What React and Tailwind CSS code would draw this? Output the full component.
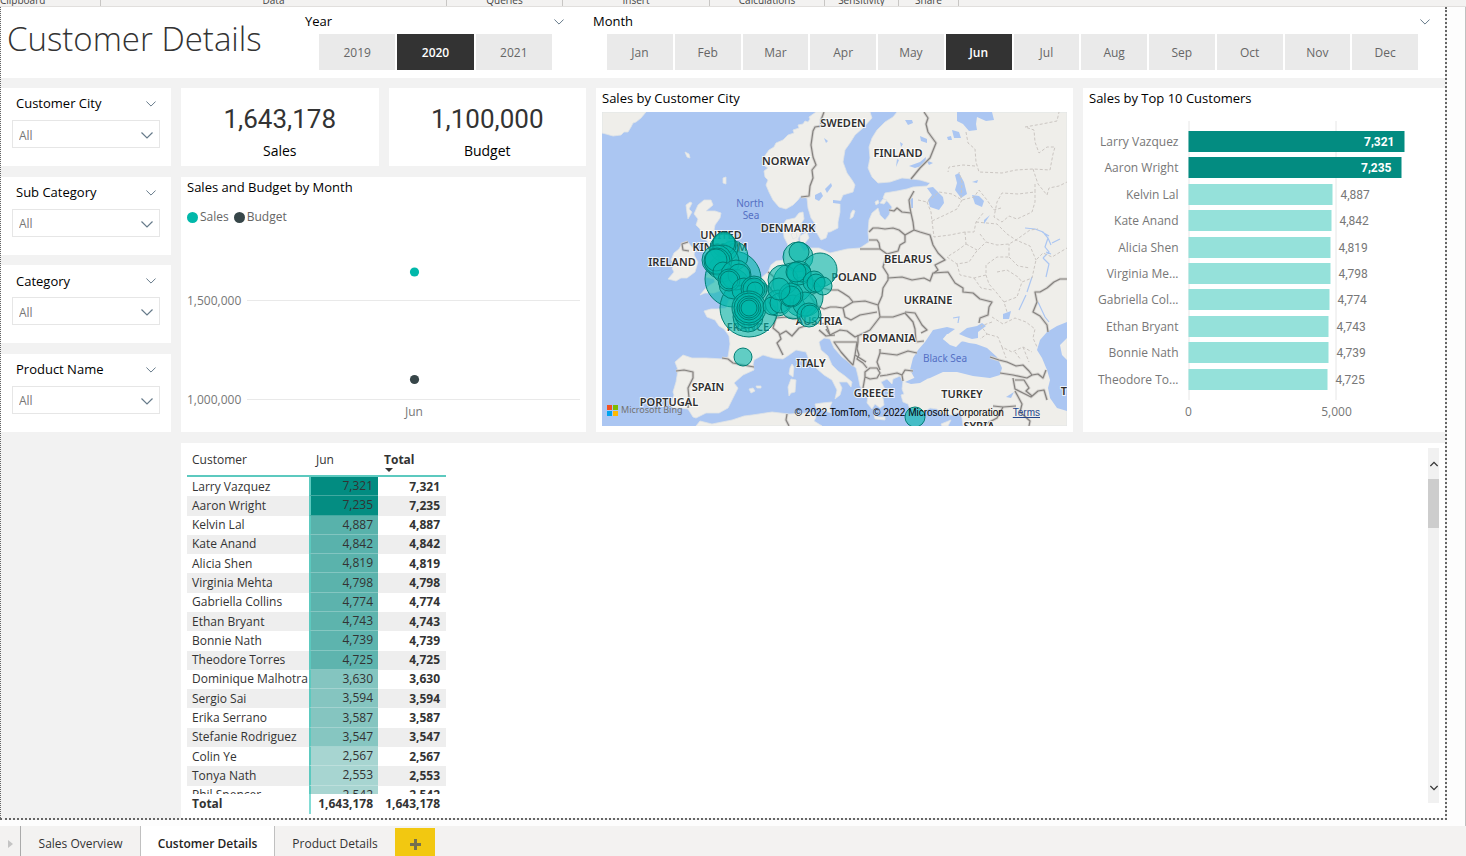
import React from "react";

const MONTHS = ["Jan", "Feb", "Mar", "Apr", "May", "Jun", "Jul", "Aug", "Sep", "Oct", "Nov", "Dec"];

const CUSTOMERS = [
  ["Larry Vazquez", "7,321", "bg-[#028c81]"],
  ["Aaron Wright", "7,235", "bg-[#048d82]"],
  ["Kelvin Lal", "4,887", "bg-[#58b2ab]"],
  ["Kate Anand", "4,842", "bg-[#59b2ac]"],
  ["Alicia Shen", "4,819", "bg-[#5ab3ac]"],
  ["Virginia Mehta", "4,798", "bg-[#5bb3ac]"],
  ["Gabriella Collins", "4,774", "bg-[#5cb3ad]"],
  ["Ethan Bryant", "4,743", "bg-[#5db4ad]"],
  ["Bonnie Nath", "4,739", "bg-[#5db4ae]"],
  ["Theodore Torres", "4,725", "bg-[#5eb4ae]"],
  ["Dominique Malhotra", "3,630", "bg-[#84c5c0]"],
  ["Sergio Sai", "3,594", "bg-[#85c5c0]"],
  ["Erika Serrano", "3,587", "bg-[#85c5c0]"],
  ["Stefanie Rodriguez", "3,547", "bg-[#86c6c1]"],
  ["Colin Ye", "2,567", "bg-[#a7d5d1]"],
  ["Tonya Nath", "2,553", "bg-[#a7d5d1]"],
  ["Phil Spencer", "2,542", "bg-[#a8d5d1]"],
];

const BARS = [
  ["Larry Vazquez", 7321],
  ["Aaron Wright", 7235],
  ["Kelvin Lal", 4887],
  ["Kate Anand", 4842],
  ["Alicia Shen", 4819],
  ["Virginia Me...", 4798],
  ["Gabriella Col...", 4774],
  ["Ethan Bryant", 4743],
  ["Bonnie Nath", 4739],
  ["Theodore To...", 4725],
];

const RIBBON = [
  ["Clipboard", "w-[101px] justify-start"],
  ["Data", "w-[346px] justify-center"],
  ["Queries", "w-[116px] justify-center"],
  ["Insert", "w-[147px] justify-center"],
  ["Calculations", "w-[115px] justify-center"],
  ["Sensitivity", "w-[74px] justify-center"],
  ["Share", "w-[60px] justify-center"],
];

function Chevron({ className = "h-[6px] w-[10px]", up = false, weight = "1.2" }) {
  return (
    <svg viewBox="0 0 12 7" className={`shrink-0 ${className}`} fill="none" stroke="currentColor" strokeWidth={weight} aria-hidden="true">
      <path d={up ? "M0.5 6.5L6 1L11.5 6.5" : "M0.5 0.5L6 6L11.5 0.5"} />
    </svg>
  );
}

function Slicer({ id, label }) {
  return (
    <section className="h-[78px] bg-white px-[11px] pt-[6px]">
      <div className="flex h-5 items-center justify-between px-1 text-[13px] text-black">
        <label htmlFor={id}>{label}</label>
        <button type="button" aria-label={`${label} options`} className="text-[#667a8a]">
          <Chevron />
        </button>
      </div>
      <div className="relative mt-[6px] w-[148px]">
        <select id={id} className="h-7 w-full appearance-none rounded-none border border-[#e6e6e6] bg-white pl-[6px] pt-[3px] text-[12px] text-[#777777]">
          <option>All</option>
        </select>
        <span className="pointer-events-none absolute right-[7px] top-[12px] text-[#667a8a]">
          <Chevron className="block h-[7px] w-[12px]" />
        </span>
      </div>
    </section>
  );
}

function Tile({ label, selected }) {
  return (
    <button
      type="button"
      aria-pressed={selected}
      className={
        selected
          ? "h-9 bg-[#333333] pt-[2px] text-[12px] font-semibold text-white"
          : "h-9 bg-[#eaeaea] pt-[2px] text-[12px] text-[#666666]"
      }
    >
      {label}
    </button>
  );
}

function Kpi({ value, label }) {
  return (
    <section className="flex h-[78px] flex-col items-center bg-white pt-[14px]">
      <div className="font-[Roboto,sans-serif] text-[26px] leading-[34px] text-[#333333]">{value}</div>
      <div className="mt-[5px] text-[14px] leading-5 text-black">{label}</div>
    </section>
  );
}

function MonthChart() {
  return (
    <svg viewBox="0 0 405 204" className="h-[204px] w-full" role="img" aria-label="Sales and Budget by Month">
      <path d="M66 72.5H399M66 171.5H399" stroke="#e9e9e9" />
      <g fill="#777777" fontSize="12">
        <text x="6" y="77">1,500,000</text>
        <text x="6" y="176">1,000,000</text>
        <text x="233" y="188" textAnchor="middle">Jun</text>
      </g>
      <circle cx="233.5" cy="44" r="4.6" fill="#01b8aa" />
      <circle cx="233.5" cy="151.5" r="4.6" fill="#374649" />
    </svg>
  );
}

function CustomerChart() {
  return (
    <svg viewBox="0 0 361 322" className="h-[322px] w-full" role="img" aria-label="Sales by Top 10 Customers">
      <path d="M105.5 12V291M252.5 12V291" stroke="#e6e6e6" />
      {BARS.map(([name, value], i) => {
        const y = Math.round(22 + i * 26.4);
        const width = Math.round(value * 0.0295);
        const top = i < 2;
        return (
          <g key={name} fontSize="12">
            <text x="95" y={y + 15} textAnchor="end" fill="#777777">{name}</text>
            <rect x="105" y={y} width={width} height="21" fill={top ? "#038c81" : "#95e1da"} />
            <text
              x={top ? 95 + width : 113 + width}
              y={y + 15}
              textAnchor={top ? "end" : "start"}
              fill={top ? "#ffffff" : "#777777"}
              fontWeight={top ? 700 : 400}
              fontFamily="Roboto, sans-serif"
            >
              {value.toLocaleString("en-US")}
            </text>
          </g>
        );
      })}
      <g fill="#777777" fontSize="12" textAnchor="middle">
        <text x="105" y="307">0</text>
        <text x="253" y="307">5,000</text>
      </g>
    </svg>
  );
}

const LAND = [
  "M0 0H44L39 6 34 10 31 11 29 15 26 20 22 20 19 23 11 24 4 22 0 21Z",
  "M214 0L207 5 208 7 206 10 203 9 201 12 196 13 197 16 191 18 192 21 186 23 181 28 174 31 172 35 167 38 162 45 164 47 161 51 163 54 166 56 162 59 163 65 166 68 164 73 167 80 171 88 177 95 184 97 191 93 196 88 199 84 201 85 205 86 206 96 209 106 214 113 213 118 216 123 219 128 224 126 226 120 228 120 236 116 236 110 238 100 238 90 241 83 251 80 253 73 250 68 245 61 241 50 243 38 248 31 253 23 261 16 270 6 268 0Z",
  "M295 0L291 5 283 10 275 18 270 26 267 35 268 46 266 56 270 65 276 71 288 70 300 66 310 67 318 68 328 71 325 74 311 75 305 77 295 79 283 81 281 86 286 90 290 95 287 103 283 108 278 103 276 96 270 101 267 108 266 120 267 130 258 136 245 137 228 141 217 136 208 136 202 139 198 133 196 127 199 121 197 115 202 107 201 100 197 101 193 106 184 108 181 113 182 125 186 133 183 140 183 148 174 149 169 153 166 160 158 167 150 172 145 177 137 184 132 189 127 188 124 196 115 197 109 197 102 199 105 205 113 208 117 214 122 217 127 224 128 232 126 245 121 247 104 246 90 246 81 243 73 250 76 258 74 270 71 280 72 283 69 291 71 296 77 296 86 297 91 305 94 306 104 301 117 301 126 296 131 286 136 276 132 271 141 263 152 258 151 253 152 248 161 243 171 246 181 247 187 243 194 238 204 240 207 248 214 256 222 263 230 268 235 278 233 287 238 283 240 276 237 270 245 270 249 275 250 270 243 264 236 259 230 253 226 244 219 238 217 230 222 226 228 227 232 236 240 245 248 251 254 256 256 264 258 274 263 282 266 284 265 291 270 297 273 292 278 296 282 293 281 286 277 280 283 277 279 270 285 267 290 272 291 267 298 264 301 269 300 277 302 282 299 283 301 290 306 292 308 297 315 295 322 300 328 296 335 297 341 302 350 303 358 300 360 306 361 314H465V0Z",
  "M96 93L102 88 109 88 111 93 104 99 113 99 119 101 118 106 113 113 112 118 120 121 125 130 132 145 140 153 144 160 143 168 138 175 128 178 120 178 112 181 103 181 98 183 103 177 108 173 113 170 112 167 104 165 108 158 107 154 112 150 110 140 104 138 106 130 100 125 98 117 94 113 96 107 92 102Z",
  "M72 141L77 137 80 132 86 130 93 139 92 143 96 150 93 160 85 166 79 166 74 169 66 167 72 160 70 156 74 152 69 148Z",
  "M94 314L98 309 110 312 130 308 142 304 150 303 170 300 187 302 205 301 212 300 214 305 212 309 220 314Z",
  "M189 267L194 268 193 280 189 281 187 284 186 275Z",
  "M190 252L192 255 191 265 187 262 188 256Z",
  "M213 292L220 291 230 290 228 295 229 301 223 299 214 296Z",
  "M272 303L277 305 283 305 283 308 273 307Z",
  "M339 312L344 310 349 308 346 314H340Z",
  "M147 277L151 276 153 279 149 281Z",
  "M154 274H159V276H155Z",
  "M251 98L253 99 251 105 248 107 249 101Z",
  "M189 122L194 120 195 125 191 127Z",
  "M198 124L205 120 207 126 202 132 198 129Z",
  "M84 93L88 90 90 91 87 97 90 100 86 107 85 101Z",
  "M83 40L87 42 88 46 85 45Z",
  "M121 66L124 65 124 72 121 71Z",
  "M281 87L285 88 282 92 278 91Z",
  "M273 90L276 88 277 91 274 93Z",
];

const WATER = [
  "M313 267L308 258 311 246 316 238 323 230 327 224 331 218 345 215 353 217 346 222 341 227 345 230 351 231 354 235 360 229 367 231 374 232 385 236 395 245 400 256 398 263 388 266 371 264 355 260 341 260 328 266 321 268Z",
  "M357 222L365 216 375 214 380 211 384 214 376 220 376 226 370 227 364 225Z",
  "M465 210L455 214 445 220 438 228 435 238 440 246 445 258 448 268 446 276 448 286 455 296 465 299V248L460 243 458 233 465 226Z",
  "M303 270L312 266 325 267 318 271 309 272Z",
  "M325 76L331 75 341 85 342 91 337 98 328 95 326 88 330 83Z",
  "M353 63L357 61 362 70 365 82 359 86 353 78 355 71Z",
  "M355 0H390L392 8 384 9 375 5 374 12 375 18 367 19 361 12 355 9Z",
  "M350 18L357 20 359 26 352 26Z",
  "M345 25L349 24 350 28 346 28Z",
  "M370 83L377 84 382 89 380 95 373 92Z",
  "M370 70L376 68 375 71Z",
  "M329 92L334 93 331 95Z",
  "M303 8L310 8 311 11 306 13Z",
  "M318 24L325 27 325 31 319 29Z",
  "M307 54L318 50 324 45 323 53 313 56Z",
  "M295 47L297 48 294 55Z",
  "M298 30L301 32 299 35Z",
  "M284 37L290 40 286 41Z",
  "M324 48L331 51 327 53Z",
  "M213 83L219 80 221 84 217 89 213 87Z",
  "M223 77L229 71 230 74 225 81Z",
  "M222 26L226 29 224 31Z",
  "M231 88L240 89 239 92 231 91Z",
  "M401 202L409 199 407 207 401 207Z",
  "M404 285L412 280 409 286Z",
  "M388 103L382 108 382 112 386 106Z",
  "M308 87L311 86 311 96 308 96Z",
];

const BORDERS = [
  "M222 0L219 8 219 14 213 15 211 19 209 33 211 45 214 53 210 58 211 66 208 74 207 84 199 85",
  "M322 0L326 6 324 12 326 20 334 31 328 46 318 56 309 67",
  "M312 79L307 88 308 96 309 101 311 110 312 118 303 123 297 118 291 116 283 117 276 116 271 116 267 120",
  "M287 98L292 99 295 96 300 100 309 101",
  "M312 118L318 120 328 123 331 133 336 141 343 148 333 153 336 158 332 161",
  "M267 128L275 128 277 131 278 137 258 137",
  "M278 137L285 142 296 139 298 133 303 130 303 123",
  "M285 142L283 148 281 155 286 163 286 168 281 176 280 184 276 193",
  "M286 166L300 165 310 168 322 166 328 169 331 161 346 160 353 171 361 176 361 180 371 181 378 187 390 190 387 195 386 203 378 206 377 211",
  "M228 178L236 178 241 181 247 185 251 190 263 189 276 193 278 205",
  "M228 195L234 195 241 196 251 190M241 196L243 205 249 208 258 203 275 200",
  "M278 205L268 218 260 222 253 225 245 219 238 218 228 223 224 217",
  "M278 205L291 205 303 201 311 210 313 217 314 230 322 229",
  "M303 200L313 201 320 213 325 218 319 221",
  "M278 237L278 241 295 243 306 239 315 241",
  "M256 223L256 230 255 237 257 243 255 247 261 251 265 256M278 241L275 250 278 258",
  "M278 264L285 263 295 261 300 263 303 258 311 259M300 263L301 269",
  "M263 260L268 256 275 256 278 261 275 266 268 267 263 265ZM263 265L261 276",
  "M232 230H255L253 243 251 253 246 248 239 240ZM253 243L264 250",
  "M388 245L397 248 405 250 414 254 421 253 427 259 430 263 436 262 441 266 444 258",
  "M398 261L411 263 425 266 430 263M411 266L413 277 421 281 429 285 436 279 442 278 445 288",
  "M413 268L422 268 427 276 424 279 430 284M413 279L420 292 418 300 428 309 427 314",
  "M391 294L401 295 414 294M401 295L395 306 380 314",
  "M465 167L458 167 452 170 445 176 438 180 433 180 435 190 431 200 438 204 445 213 446 220",
  "M120 246L126 247 131 251 141 253 152 255",
  "M74 259L82 258 91 260 91 266 86 276 87 286 86 296",
  "M185 302L184 308 187 314",
  "M174 206L171 216 177 221 179 227 175 231 181 243",
  "M156 169L164 174 170 180 166 190 174 196 174 206",
  "M177 223L184 219 190 224 197 216 206 213 214 211 224 212 228 223",
  "M174 206L185 205 198 208 206 213M217 218L224 224 233 223",
  "M228 178L221 176 208 184 214 193 222 197 228 195M214 193L205 201 202 207",
  "M166 160L172 165 169 177 163 180",
  "M86 130L80 132 81 138 87 139",
];

const PROVINCES =
  "M364 20L366 31 373 37 374 50 377 60 400 61 414 58 431 57 448 58 451 42 453 35 445 35 437 41 433 30 432 18 423 15 440 12 455 9 457 0M373 54L361 53 347 55 346 60M359 86L360 70 357 60M431 57L436 72 445 83 447 76 457 74 465 70M433 72L433 80 416 82 400 81 395 90 392 105 400 110 407 104 415 107 430 100 433 90 433 80M316 88L325 90 337 80 350 82 360 88 372 85 377 78 385 88 392 98 399 96M325 90L329 100 330 109 345 102 355 97 360 88M330 109L332 125 348 123 363 120 372 120 374 110 382 100M363 120L364 132 356 138 345 145M374 110L395 112 405 122 414 128 428 118 436 117M378 122L384 130 395 133 407 132 414 128 428 134 434 148M345 145L355 152 367 150 374 140 384 130M355 152L358 163 372 166 384 163 384 153 395 145 407 145 407 132M384 163L387 172 394 180 402 190 405 200M372 166L379 176 390 178M402 190L415 185 420 170 430 166 434 148 441 141 450 145 465 136M390 210L379 214 385 222 378 227M390 205L401 212 413 206 424 210 433 217 431 226 435 235M385 222L396 225 400 235 410 240 421 235 430 240M400 235L404 246M413 240L419 248M421 235L427 250M407 145L416 154 428 156M364 132L375 138M395 160L405 158 416 165 420 170";

const RIVERS =
  "M423 116L433 117 441 120 446 126 449 133M440 120L447 124M450 131L458 127M446 126L443 135 447 140 441 146M444 140L449 142M441 146L447 152 444 165M430 165L425 180M424 183L417 198M351 206L357 205 356 211M436 190L443 205 447 210";

const COUNTRY_LABELS = [
  ["NORWAY", 184, 53],
  ["SWEDEN", 241, 15],
  ["FINLAND", 296, 45],
  ["DENMARK", 186, 120],
  ["UNITED", 119, 127],
  ["KINGDOM", 118, 139],
  ["IRELAND", 70, 154],
  ["BELARUS", 306, 151],
  ["POLAND", 252, 169],
  ["UKRAINE", 326, 192],
  ["AUSTRIA", 217, 213],
  ["FRANCE", 146, 219],
  ["ROMANIA", 287, 230],
  ["ITALY", 209, 255],
  ["SPAIN", 106, 279],
  ["PORTUGAL", 67, 294],
  ["GREECE", 272, 285],
  ["TURKEY", 360, 286],
  ["SYRIA", 377, 318],
  ["TU", 466, 283],
];

const BUBBLES = [
  [131, 167, 28], [147, 196, 29], [146, 205, 15], [146, 203, 13], [131, 144, 15], [122, 136, 14],
  [122, 133, 12], [122, 131, 11], [120, 150, 17], [115, 148, 15], [115, 149, 13], [114, 148, 11],
  [121, 160, 10], [132, 172, 15], [134, 163, 15], [137, 163, 11], [127, 168, 11], [127, 168, 9],
  [142, 178, 12], [152, 177, 13], [152, 177, 11], [153, 178, 8], [147, 196, 17], [147, 196, 15],
  [147, 196, 12], [147, 196, 10], [147, 196, 8], [196, 145, 15], [197, 140, 10], [218, 158, 17],
  [201, 185, 20], [191, 171, 20], [181, 168, 15], [176, 191, 13], [170, 194, 9], [178, 191, 10],
  [191, 195, 12], [203, 192, 12], [189, 183, 12], [189, 184, 10], [177, 177, 11], [197, 161, 12],
  [200, 161, 9], [194, 160, 10], [212, 170, 11], [214, 171, 9], [221, 174, 9], [207, 203, 12],
  [208, 202, 9], [141, 245, 9], [313, 305, 10],
];

function SalesMap() {
  return (
    <div className="relative h-[314px] overflow-hidden font-['Noto_Sans','Open_Sans',sans-serif]">
      <svg viewBox="0 0 465 314" preserveAspectRatio="xMidYMid slice" className="h-full w-full bg-[#abc6f2]" role="img" aria-label="Map of sales by customer city">
        <g fill="#efeeea" stroke="#dfe3e6" strokeWidth="0.8" strokeLinejoin="round">
          {LAND.map((d) => <path key={d} d={d} />)}
        </g>
        <g fill="#abc6f2">
          {WATER.map((d) => <path key={d} d={d} />)}
        </g>
        <path d="M341 227L345 222 352 222 357 226 364 229 355 230 354 235 348 233Z" fill="#efeeea" />
        <path d={RIVERS} fill="none" stroke="#abc6f2" strokeWidth="1.2" />
        <path d={PROVINCES} fill="none" stroke="#cbc6c2" strokeWidth="1" strokeDasharray="3 2" />
        <g fill="none" strokeLinejoin="round">
          {BORDERS.map((d) => <path key={d} d={d} stroke="#d6d4d1" strokeWidth="3" />)}
          {BORDERS.map((d) => <path key={d + "c"} d={d} stroke="#85827f" strokeWidth="1.2" />)}
        </g>
        <g fontSize="11" fontWeight="600" fill="#2f2f2f" stroke="#ffffff" strokeOpacity="0.8" strokeWidth="2" paintOrder="stroke" textAnchor="middle">
          {COUNTRY_LABELS.map(([name, x, y]) => <text key={name} x={x} y={y}>{name}</text>)}
        </g>
        <g fontSize="10" fill="#5570c4" textAnchor="middle">
          <text x="148" y="95">North</text>
          <text x="149" y="107">Sea</text>
          <text x="343" y="250">Black Sea</text>
        </g>
        <g fill="#01b8aa" fillOpacity="0.6" stroke="#017e74" strokeWidth="1">
          {BUBBLES.map(([cx, cy, r], i) => <circle key={i} cx={cx} cy={cy} r={r} />)}
        </g>
      </svg>
      <div className="absolute bottom-[10px] left-[5px] flex items-center gap-[3px] text-[9px] leading-3 text-[#737373]">
        <svg viewBox="0 0 11 11" className="h-[11px] w-[11px]" aria-hidden="true">
          <path d="M0 0h5v5H0z" fill="#f25022" />
          <path d="M6 0h5v5H6z" fill="#7fba00" />
          <path d="M0 6h5v5H0z" fill="#00a4ef" />
          <path d="M6 6h5v5H6z" fill="#ffb900" />
        </svg>
        <span>Microsoft Bing</span>
      </div>
      <div className="absolute bottom-[7px] right-[27px] flex gap-[9px] whitespace-nowrap font-['Liberation_Sans',Arial,sans-serif] text-[10px] leading-3 text-black">
        <span>© 2022 TomTom, © 2022 Microsoft Corporation</span>
        <a href="#terms" className="text-[#26478d] underline">Terms</a>
      </div>
    </div>
  );
}

function CustomerTable() {
  return (
    <div className="h-[366px] overflow-hidden">
      <table className="h-[377px] w-[259px] table-fixed border-separate border-spacing-0 text-[12px] leading-[18px] text-[#333333]">
        <thead>
          <tr className="h-[29px]">
            <th scope="col" className="w-[122px] border-b-2 border-b-[#5cc9bf] pb-[6px] pl-[5px] pt-[2px] text-left font-normal">Customer</th>
            <th scope="col" className="w-[69px] border-b-2 border-b-[#5cc9bf] pb-[6px] pl-[7px] pt-[2px] text-left font-normal">Jun</th>
            <th scope="col" aria-sort="descending" className="relative border-b-2 border-b-[#5cc9bf] pb-[6px] pl-[6px] pt-[2px] text-left font-bold">
              Total
              <svg viewBox="0 0 8 4" className="absolute bottom-[3px] left-[7px] h-1 w-2" aria-hidden="true"><path d="M0 0H8L4 4Z" fill="#333333" /></svg>
            </th>
          </tr>
        </thead>
        <tbody>
          {CUSTOMERS.map(([name, value, shade], i) => (
            <tr key={name} className={i % 2 ? "bg-[#eeeeee]" : "bg-white"}>
              <td className="whitespace-nowrap p-0 pl-[5px]">{name}</td>
              <td className={`border-b border-b-[#ffffff40] border-l-2 border-l-[#5cc9bf] p-0 pr-[5px] text-right ${shade}`}>{value}</td>
              <td className="p-0 pr-[6px] text-right font-bold">{value}</td>
            </tr>
          ))}
        </tbody>
        <tfoot className="sticky bottom-0">
          <tr className="h-[20px] bg-white font-bold">
            <td className="p-0 pl-[5px]">Total</td>
            <td className="border-l-2 border-[#84dcd5] p-0 pr-[5px] text-right">1,643,178</td>
            <td className="p-0 pr-[6px] text-right">1,643,178</td>
          </tr>
        </tfoot>
      </table>
    </div>
  );
}

export default function App() {
  return (
    <div className="flex min-h-screen flex-col bg-[#f3f2f1] font-['Open_Sans','Noto_Sans',sans-serif] text-[#333333]">
      <div className="flex h-[7px] items-end overflow-hidden border-b border-[#e1dfdd] text-[10px] leading-[14px] text-[#444444]">
        {RIBBON.map(([name, layout]) => (
          <div key={name} className={`flex h-[13px] shrink-0 items-center border-r border-[#c8c6c4] ${layout}`}>{name}</div>
        ))}
      </div>

      <div className="flex grow flex-col border-r border-[#c0c0c0] bg-[#fdfdfd] pb-[6px] pr-[18px]">
        <main className="flex grow flex-col border-b-2 border-l border-r-2 border-dotted border-[#666666] bg-[#f2f2f2]">
          <header className="flex h-[71px] bg-white">
            <h1 className="w-[304px] shrink-0 whitespace-nowrap pl-[6px] pt-[6px] text-[33px] font-light leading-[52px]">Customer Details</h1>
            <section className="w-[261px] shrink-0 pt-[5px]">
              <div className="flex h-5 items-center justify-between pr-[2px] text-[13px] text-black">
                <h2>Year</h2>
                <button type="button" aria-label="Year options" className="text-[#667a8a]"><Chevron /></button>
              </div>
              <div className="mx-[14px] mt-[2px] grid grid-cols-3 gap-[2px]">
                {["2019", "2020", "2021"].map((y) => <Tile key={y} label={y} selected={y === "2020"} />)}
              </div>
            </section>
            <section className="ml-[27px] mr-[15px] min-w-0 grow pt-[5px]">
              <div className="flex h-5 items-center justify-between text-[13px] text-black">
                <h2>Month</h2>
                <button type="button" aria-label="Month options" className="text-[#667a8a]"><Chevron /></button>
              </div>
              <div className="ml-[14px] mr-[12px] mt-[2px] grid grid-cols-12 gap-[2px]">
                {MONTHS.map((m) => <Tile key={m} label={m} selected={m === "Jun"} />)}
              </div>
            </section>
          </header>

          <div className="mt-[10px] flex grow gap-[10px]">
            <aside className="flex h-[344px] w-[170px] shrink-0 flex-col justify-between">
              <Slicer id="city" label="Customer City" />
              <Slicer id="sub-category" label="Sub Category" />
              <Slicer id="category" label="Category" />
              <Slicer id="product" label="Product Name" />
            </aside>

            <div className="flex min-w-0 grow flex-col gap-[11px]">
              <div className="grid grid-cols-[405fr_477fr_362fr] gap-[10px]">
                <div className="flex flex-col gap-[11px]">
                  <div className="grid grid-cols-2 gap-[10px]">
                    <Kpi value="1,643,178" label="Sales" />
                    <Kpi value="1,100,000" label="Budget" />
                  </div>
                  <section className="grow bg-white">
                    <h2 className="pl-[6px] text-[13px] leading-[21px] text-black">Sales and Budget by Month</h2>
                    <div className="mb-[1px] mt-[9px] flex h-5 items-center gap-[5px] pl-[6px] text-[12px] text-[#666666]">
                      <span className="flex items-center gap-[2px]"><i className="h-[11px] w-[11px] rounded-full bg-[#01b8aa]" />Sales</span>
                      <span className="flex items-center gap-[2px]"><i className="h-[11px] w-[11px] rounded-full bg-[#374649]" />Budget</span>
                    </div>
                    <MonthChart />
                  </section>
                </div>
                <section className="min-w-0 bg-white px-[6px] pb-[6px]">
                  <h2 className="mb-[3px] text-[13px] leading-[21px] text-black">Sales by Customer City</h2>
                  <SalesMap />
                </section>
                <section className="min-w-0 bg-white">
                  <h2 className="pl-[6px] text-[13px] leading-[21px] text-black">Sales by Top 10 Customers</h2>
                  <CustomerChart />
                </section>
              </div>

              <section className="flex grow items-start justify-between bg-white pl-[6px] pr-[6px] pt-[5px]">
                <CustomerTable />
                <div className="flex h-[355px] w-[11px] flex-col items-center bg-[#f1f1f1] text-[#333333]">
                  <button type="button" aria-label="Scroll up" className="flex h-[31px] w-full items-center justify-center"><Chevron up weight="2" className="h-[6px] w-[8px]" /></button>
                  <div className="h-[49px] w-full bg-[#cdcdcd]" />
                  <button type="button" aria-label="Scroll down" className="mt-auto flex h-[30px] w-full items-center justify-center"><Chevron weight="2" className="h-[6px] w-[8px]" /></button>
                </div>
              </section>
            </div>
          </div>
        </main>
      </div>

      <nav aria-label="Report pages" className="flex h-[30px] text-[12px] text-[#333333]">
        <button type="button" aria-label="Next pages" className="flex w-[21px] items-center justify-end border-r border-[#aaaaaa] pr-[7px] pt-[6px]">
          <svg viewBox="0 0 5 8" className="h-2 w-[5px]" aria-hidden="true"><path d="M0 0L5 4L0 8Z" fill="#c4c4c4" /></svg>
        </button>
        <button type="button" className="w-[120px] border-r border-[#c0c0c0] pt-[6px]">Sales Overview</button>
        <button type="button" aria-current="page" className="w-[134px] border-r border-[#c0c0c0] bg-white pt-[6px] font-semibold text-[#252423]">Customer Details</button>
        <button type="button" className="w-[120px] pt-[6px]">Product Details</button>
        <button type="button" aria-label="New page" className="mt-[2px] flex w-10 items-center justify-center bg-[#f2c811] pt-[5px]">
          <svg viewBox="0 0 11 11" className="h-[11px] w-[11px]" aria-hidden="true"><path d="M4 0H7V4H11V7H7V11H4V7H0V4H4Z" fill="#75704f" /></svg>
        </button>
      </nav>
    </div>
  );
}
